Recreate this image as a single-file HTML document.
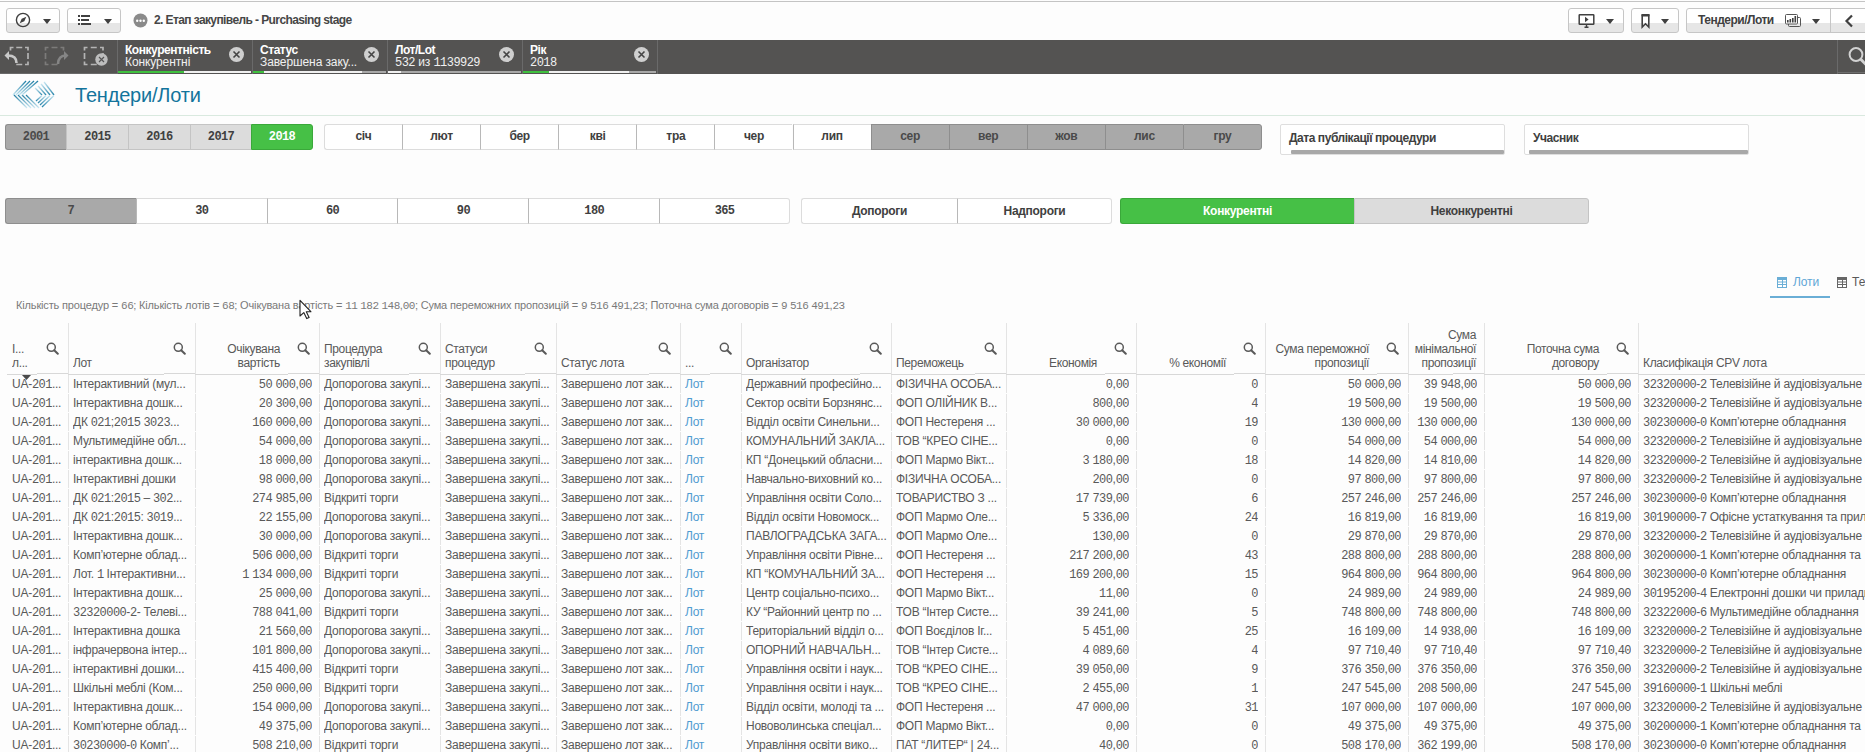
<!DOCTYPE html>
<html><head><meta charset="utf-8">
<style>
*{box-sizing:border-box;margin:0;padding:0}
html,body{width:1865px;height:752px;overflow:hidden;background:#fdfdfd;font-family:"Liberation Sans",sans-serif;color:#595959;position:relative}
.a{position:absolute}
#tb{position:absolute;left:0;top:0;width:1865px;height:40px;background:#fdfdfd}
#tl{position:absolute;left:0;top:1px;width:1865px;height:1px;background:#c4c4c4}
.btn{position:absolute;top:8px;height:25px;border:1px solid #c6c6c6;border-radius:3px;background:linear-gradient(#fff 0,#fff 62%,#e6e6e6 62%,#e6e6e6 100%)}
.caret{position:absolute;width:0;height:0;border-left:4px solid transparent;border-right:4px solid transparent;border-top:5px solid #404040}
#sb{position:absolute;left:0;top:40px;width:1865px;height:34px;background:#545352}
.sel{position:absolute;top:0;height:34px;width:133px;color:#fff;font-size:12px;border-left:1px solid #6a6a6a;}
.sel .t{position:absolute;left:7px;top:3px;font-weight:bold;letter-spacing:-0.45px}
.sel .v{position:absolute;left:7px;top:15px;letter-spacing:-0.1px;color:#f0f0f0}
.sel .bar{position:absolute;left:0;bottom:1px;height:2px;width:133px;background:#a8a8a8}
.sel .bar i{position:absolute;top:0;height:2px;display:block}
.xc{position:absolute;top:7px;width:15px;height:15px;border-radius:50%;background:#cfcfcf}
#title{position:absolute;left:75px;top:84px;font-size:20px;color:#13749c;letter-spacing:-0.2px}
.yb{position:absolute;top:124px;height:26px;font-size:12px;font-weight:bold;text-align:center;line-height:25px;border:1px solid #b9b9b9;color:#404040}
.mb{position:absolute;top:124px;height:26px;font-size:12px;font-weight:bold;text-align:center;line-height:25px;border:1px solid #dedede;background:#fff;color:#404040;letter-spacing:-0.3px}
.mb.g{background:#a8a8a8;border-color:#8f8f8f}
.db{position:absolute;height:26px;font-size:12px;font-weight:bold;text-align:center;line-height:25px;border:1px solid #dedede;background:#fff;color:#404040;letter-spacing:-0.3px}
.bt{position:absolute;font-size:12px;font-weight:bold;text-align:center;line-height:23px;letter-spacing:-0.3px}
.bt.mono{font-family:"Liberation Mono",monospace;letter-spacing:-0.6px;line-height:24px}
.fb{position:absolute;top:124px;height:31px;border:1px solid #dedede;background:#fff;border-radius:2px;font-size:12px;font-weight:bold;color:#404040;letter-spacing:-0.45px}
.fb span{position:absolute;left:8px;top:6px}
.fb i{position:absolute;left:10px;right:0;bottom:0;height:4px;background:#a8a8a8;border-radius:1px}
.ht{position:absolute;font-size:12px;line-height:14px;letter-spacing:-0.35px;white-space:nowrap;overflow:hidden;color:#595959}
.ht.r{text-align:right;overflow:visible}
.si{position:absolute}
.vl{position:absolute;top:323px;width:1px;height:51px;background:#e4e4e4}
.vb{position:absolute;top:375px;width:1px;height:377px;background:repeating-linear-gradient(to bottom,#e4e4e4 0,#e4e4e4 18px,#fdfdfd 18px,#fdfdfd 19px)}
.c{position:absolute;font-size:12px;line-height:19px;height:19px;white-space:nowrap;overflow:hidden;letter-spacing:-0.25px}
.c.r{letter-spacing:-0.05px}
.lnk{color:#4f9bd0}
.m{font-family:"Liberation Mono",monospace;letter-spacing:-0.55px}
</style></head><body>
<div id="tb">
 <div id="tl"></div>
 <div class="btn" style="left:6px;width:54px"><svg class="a" style="left:8px;top:3px" width="16" height="16" viewBox="0 0 16 16"><circle cx="8" cy="8" r="6.6" fill="none" stroke="#404040" stroke-width="1.4"/><path d="M11.3 4.7 L9.3 9.3 L4.7 11.3 L6.7 6.7Z" fill="#404040"/></svg><div class="caret" style="left:36px;top:10px"></div></div>
 <div class="btn" style="left:67px;width:54px"><svg class="a" style="left:9px;top:4px" width="16" height="14" viewBox="0 0 16 14"><rect x="1" y="2" width="2" height="2" fill="#404040"/><rect x="4" y="2" width="9" height="2" fill="#404040"/><rect x="1" y="6" width="2" height="2" fill="#404040"/><rect x="4" y="6" width="8" height="2" fill="#404040"/><rect x="1" y="10" width="2" height="2" fill="#404040"/><rect x="4" y="10" width="10" height="2" fill="#404040"/></svg><div class="caret" style="left:36px;top:10px"></div></div>
 <svg class="a" style="left:133px;top:13px" width="15" height="15" viewBox="0 0 15 15"><circle cx="7.5" cy="7.5" r="7" fill="#8a8a8a"/><circle cx="4.2" cy="7.7" r="1.2" fill="#fff"/><circle cx="7.5" cy="7.7" r="1.2" fill="#fff"/><circle cx="10.8" cy="7.7" r="1.2" fill="#fff"/></svg>
 <div class="a" style="left:154px;top:13px;font-size:12px;font-weight:bold;color:#464646;letter-spacing:-0.6px">2. Етап закупівель - Purchasing stage</div>
 <div class="btn" style="left:1568px;width:56px"><svg class="a" style="left:9px;top:4px" width="18" height="16" viewBox="0 0 18 16"><rect x="1.2" y="1.7" width="14.6" height="9.6" rx="0.6" fill="none" stroke="#404040" stroke-width="1.5"/><path d="M7 3.8 L10.6 6.5 L7 9.2Z" fill="#404040"/><path d="M8.5 11.5 V14 M6.5 14.3 H10.5" stroke="#404040" stroke-width="1.4"/></svg><div class="caret" style="left:37px;top:10px"></div></div>
 <div class="btn" style="left:1631px;width:48px"><svg class="a" style="left:8px;top:4px" width="12" height="16" viewBox="0 0 12 16"><path d="M2.2 2 H8.8 V14 L5.5 10.8 L2.2 14Z" fill="none" stroke="#404040" stroke-width="1.6" stroke-linejoin="miter"/><rect x="1.5" y="1" width="8" height="2.5" rx="1" fill="#404040"/></svg><div class="caret" style="left:29px;top:10px"></div></div>
 <div class="btn" style="left:1686px;width:146px;border-radius:3px 0 0 3px"><div class="a" style="left:11px;top:4px;font-size:12px;font-weight:bold;color:#404040;letter-spacing:-0.5px">Тендери/Лоти</div><svg class="a" style="left:98px;top:5px" width="17" height="15" viewBox="0 0 17 15"><rect x="3.5" y="3.5" width="12" height="9" rx="1" fill="none" stroke="#555" stroke-width="1"/><rect x="0.5" y="0.5" width="12" height="9.5" rx="1" fill="#fff" stroke="#555" stroke-width="1"/><rect x="2" y="6" width="1.6" height="2.5" fill="#404040"/><rect x="4.5" y="5" width="1.6" height="3.5" fill="#404040"/><rect x="7" y="4" width="1.6" height="4.5" fill="#404040"/><rect x="9.5" y="2" width="1.6" height="6.5" fill="#404040"/></svg><div class="caret" style="left:125px;top:10px"></div></div>
 <div class="btn" style="left:1830px;width:50px;border-radius:0"><svg class="a" style="left:13px;top:5px" width="10" height="14" viewBox="0 0 10 14"><path d="M8 1.5 L2.5 7 L8 12.5" fill="none" stroke="#404040" stroke-width="2.2"/></svg></div>
</div>
<div id="sb">
 <svg class="a" style="left:0;top:0" width="116" height="33" viewBox="0 0 116 33"><path d="M10.5 10.5V7.5H13.5M16.25 7.5H22.25M25 7.5H28V10.5M28 13.0V19.0M28 21.5V24.5H25M22.25 24.5H16.25" stroke="#b4b4b4" stroke-width="1.7" fill="none"/><path d="M16.5 23 C16.5 17.5 13 15.5 8 15.5" stroke="#c8c8c8" stroke-width="2.6" fill="none"/><path d="M4.5 15.5 L9 11 L9 20Z" fill="#c8c8c8"/><path d="M45.5 10.5V7.5H48.5M51.5 7.5H57.5M60.5 7.5H63.5V10.5M57.5 24.5H51.5M48.5 24.5H45.5V21.5M45.5 19.0V13.0" stroke="#7c7b7a" stroke-width="1.7" fill="none"/><path d="M58 24 C58 18.5 61.5 15.5 65 15.5" stroke="#858585" stroke-width="2.6" fill="none"/><path d="M68.5 15.5 L64 11 L64 20Z" fill="#858585"/><path d="M84.5 10.5V7.5H87.5M90.75 7.5H96.75M100 7.5H103V10.5M103 13.0V19.0M96.75 24.5H90.75M87.5 24.5H84.5V21.5M84.5 19.0V13.0" stroke="#b4b4b4" stroke-width="1.7" fill="none"/><circle cx="101.5" cy="19.5" r="6.2" fill="#bdbdbd"/><path d="M99 17 L104 22 M104 17 L99 22" stroke="#555" stroke-width="1.2"/></svg>
 
 <div class="sel" style="left:117px"><div class="t">Конкурентність</div><div class="v">Конкурентні</div><div class="xc" style="left:111px"><svg width="15" height="15" viewBox="0 0 15 15"><path d="M4.5 4.5 L10.5 10.5 M10.5 4.5 L4.5 10.5" stroke="#454545" stroke-width="1.6"/></svg></div><div class="bar"><i style="left:0px;width:66px;background:#3fc13f"></i><i style="left:66px;width:67px;background:#f0f0f0"></i></div></div>
<div class="sel" style="left:252px"><div class="t">Статус</div><div class="v">Завершена заку...</div><div class="xc" style="left:111px"><svg width="15" height="15" viewBox="0 0 15 15"><path d="M4.5 4.5 L10.5 10.5 M10.5 4.5 L4.5 10.5" stroke="#454545" stroke-width="1.6"/></svg></div><div class="bar"><i style="left:0px;width:11px;background:#3fc13f"></i><i style="left:11px;width:98px;background:#f0f0f0"></i></div></div>
<div class="sel" style="left:387px"><div class="t">Лот/Lot</div><div class="v"><span class="m">532</span> из <span class="m">1139929</span></div><div class="xc" style="left:111px"><svg width="15" height="15" viewBox="0 0 15 15"><path d="M4.5 4.5 L10.5 10.5 M10.5 4.5 L4.5 10.5" stroke="#454545" stroke-width="1.6"/></svg></div><div class="bar"><i style="left:0px;width:13px;background:#f0f0f0"></i></div></div>
<div class="sel" style="left:522px"><div class="t">Рік</div><div class="v"><span class="m">2018</span></div><div class="xc" style="left:111px"><svg width="15" height="15" viewBox="0 0 15 15"><path d="M4.5 4.5 L10.5 10.5 M10.5 4.5 L4.5 10.5" stroke="#454545" stroke-width="1.6"/></svg></div><div class="bar"><i style="left:0px;width:26px;background:#3fc13f"></i><i style="left:26px;width:80px;background:#f0f0f0"></i></div></div>
 <div class="a" style="left:0;top:33px;width:117px;height:1px;background:#6a6a6a"></div>
 <div class="a" style="left:657px;top:0;width:1px;height:34px;background:#6a6a6a"></div>
 <div class="a" style="left:1837px;top:0;width:1px;height:34px;background:#6a6a6a"></div>
 <svg class="a" style="left:1847px;top:6px" width="19" height="20" viewBox="0 0 19 20"><circle cx="9" cy="8.5" r="6.4" fill="none" stroke="#d2d2d2" stroke-width="2"/><path d="M13.5 13 L19 18.5" stroke="#d2d2d2" stroke-width="3"/></svg><div class="a" style="left:1837px;top:32px;width:28px;height:1px;background:#6e6e6e"></div>
</div>
<svg class="a" style="left:10px;top:78px" width="48" height="34" viewBox="10 78 48 34"><defs><linearGradient id="g1" x1="0" y1="0" x2="0" y2="1"><stop offset="0" stop-color="#1e7fa6"/><stop offset="1" stop-color="#c6e6f2"/></linearGradient><linearGradient id="g2" x1="0" y1="0" x2="0" y2="1"><stop offset="0" stop-color="#237ea3"/><stop offset="1" stop-color="#cde9f4"/></linearGradient><linearGradient id="g3" x1="0" y1="0" x2="1" y2="0"><stop offset="0" stop-color="#c9e7f3"/><stop offset="1" stop-color="#2b86ab"/></linearGradient><linearGradient id="g4" x1="1" y1="0" x2="0" y2="1"><stop offset="0" stop-color="#c9e7f3"/><stop offset="1" stop-color="#2a87ad"/></linearGradient></defs><g stroke-width="1.3" fill="none" stroke-linecap="butt"><path d="M26 81 L13 95" stroke="url(#g1)"/><path d="M14 95 L27 108" stroke="url(#g2)"/><path d="M35 88 L42 95" stroke="url(#g3)"/><path d="M42 95.5 L36 101" stroke="url(#g4)"/><path d="M30 81 L16 95" stroke="url(#g1)"/><path d="M18 95 L31 108" stroke="url(#g2)"/><path d="M38 86 L46 95" stroke="url(#g3)"/><path d="M46 95.5 L38 103" stroke="url(#g4)"/><path d="M34 81 L19 95" stroke="url(#g1)"/><path d="M22 95 L35 108" stroke="url(#g2)"/><path d="M41 84 L50 95" stroke="url(#g3)"/><path d="M50 95.5 L40 105" stroke="url(#g4)"/><path d="M38 81 L22 95" stroke="url(#g1)"/><path d="M26 95 L39 108" stroke="url(#g2)"/><path d="M44 82 L54 95" stroke="url(#g3)"/><path d="M54 95.5 L42 107" stroke="url(#g4)"/></g></svg>
<div id="title">Тендери/Лоти</div>
<div class="a" style="left:0;top:115px;width:1865px;height:1px;background:#d9e9df"></div>
<div class="bt mono" style="left:5.00px;top:124px;width:61.00px;height:26px;background:#a9a9a9;color:#4a4a4a;border-top:1px solid #8e8e8e;border-bottom:1px solid #8e8e8e;border-left:1px solid #8e8e8e;border-radius:3px 0 0 3px;">2001</div>
<div class="bt mono" style="left:66.00px;top:124px;width:62.00px;height:26px;background:#dcdcdc;color:#404040;border-top:1px solid #c4c4c4;border-bottom:1px solid #c4c4c4;border-left:1px solid #c4c4c4;">2015</div>
<div class="bt mono" style="left:128.00px;top:124px;width:62.00px;height:26px;background:#dcdcdc;color:#404040;border-top:1px solid #c4c4c4;border-bottom:1px solid #c4c4c4;border-left:1px solid #c4c4c4;">2016</div>
<div class="bt mono" style="left:190.00px;top:124px;width:61.00px;height:26px;background:#dcdcdc;color:#404040;border-top:1px solid #c4c4c4;border-bottom:1px solid #c4c4c4;border-left:1px solid #c4c4c4;">2017</div>
<div class="bt mono" style="left:251.00px;top:124px;width:62.00px;height:26px;background:#46c046;color:#fff;border-top:1px solid #3aa83a;border-bottom:1px solid #3aa83a;border-left:1px solid #3aa83a;border-right:1px solid #3aa83a;border-radius:0 3px 3px 0;">2018</div>
<div class="bt" style="left:324.00px;top:124px;width:78.00px;height:26px;background:#fff;color:#404040;border-top:1px solid #dcdcdc;border-bottom:1px solid #dcdcdc;border-left:1px solid #dcdcdc;border-radius:3px 0 0 3px;">січ</div>
<div class="bt" style="left:402.00px;top:124px;width:78.10px;height:26px;background:#fff;color:#404040;border-top:1px solid #dcdcdc;border-bottom:1px solid #dcdcdc;border-left:1px solid #b8b8b8;">лют</div>
<div class="bt" style="left:480.10px;top:124px;width:78.10px;height:26px;background:#fff;color:#404040;border-top:1px solid #dcdcdc;border-bottom:1px solid #dcdcdc;border-left:1px solid #b8b8b8;">бер</div>
<div class="bt" style="left:558.20px;top:124px;width:78.10px;height:26px;background:#fff;color:#404040;border-top:1px solid #dcdcdc;border-bottom:1px solid #dcdcdc;border-left:1px solid #b8b8b8;">кві</div>
<div class="bt" style="left:636.30px;top:124px;width:78.10px;height:26px;background:#fff;color:#404040;border-top:1px solid #dcdcdc;border-bottom:1px solid #dcdcdc;border-left:1px solid #b8b8b8;">тра</div>
<div class="bt" style="left:714.40px;top:124px;width:78.10px;height:26px;background:#fff;color:#404040;border-top:1px solid #dcdcdc;border-bottom:1px solid #dcdcdc;border-left:1px solid #b8b8b8;">чер</div>
<div class="bt" style="left:792.50px;top:124px;width:78.10px;height:26px;background:#fff;color:#404040;border-top:1px solid #dcdcdc;border-bottom:1px solid #dcdcdc;border-left:1px solid #b8b8b8;">лип</div>
<div class="bt" style="left:870.60px;top:124px;width:78.10px;height:26px;background:#a9a9a9;color:#4a4a4a;border-top:1px solid #8e8e8e;border-bottom:1px solid #8e8e8e;border-left:1px solid #8e8e8e;">сер</div>
<div class="bt" style="left:948.70px;top:124px;width:78.10px;height:26px;background:#a9a9a9;color:#4a4a4a;border-top:1px solid #8e8e8e;border-bottom:1px solid #8e8e8e;border-left:1px solid #8e8e8e;">вер</div>
<div class="bt" style="left:1026.80px;top:124px;width:78.10px;height:26px;background:#a9a9a9;color:#4a4a4a;border-top:1px solid #8e8e8e;border-bottom:1px solid #8e8e8e;border-left:1px solid #8e8e8e;">жов</div>
<div class="bt" style="left:1104.90px;top:124px;width:78.10px;height:26px;background:#a9a9a9;color:#4a4a4a;border-top:1px solid #8e8e8e;border-bottom:1px solid #8e8e8e;border-left:1px solid #8e8e8e;">лис</div>
<div class="bt" style="left:1183.00px;top:124px;width:79.00px;height:26px;background:#a9a9a9;color:#4a4a4a;border-top:1px solid #8e8e8e;border-bottom:1px solid #8e8e8e;border-left:1px solid #8e8e8e;border-right:1px solid #8e8e8e;border-radius:0 3px 3px 0;">гру</div>
<div class="bt mono" style="left:5.00px;top:198px;width:130.83px;height:26px;background:#a9a9a9;color:#4a4a4a;border-top:1px solid #8e8e8e;border-bottom:1px solid #8e8e8e;border-left:1px solid #8e8e8e;border-radius:3px 0 0 3px;">7</div>
<div class="bt mono" style="left:135.83px;top:198px;width:130.83px;height:26px;background:#fff;color:#404040;border-top:1px solid #dcdcdc;border-bottom:1px solid #dcdcdc;border-left:1px solid #b8b8b8;">30</div>
<div class="bt mono" style="left:266.66px;top:198px;width:130.83px;height:26px;background:#fff;color:#404040;border-top:1px solid #dcdcdc;border-bottom:1px solid #dcdcdc;border-left:1px solid #b8b8b8;">60</div>
<div class="bt mono" style="left:397.49px;top:198px;width:130.83px;height:26px;background:#fff;color:#404040;border-top:1px solid #dcdcdc;border-bottom:1px solid #dcdcdc;border-left:1px solid #b8b8b8;">90</div>
<div class="bt mono" style="left:528.32px;top:198px;width:130.83px;height:26px;background:#fff;color:#404040;border-top:1px solid #dcdcdc;border-bottom:1px solid #dcdcdc;border-left:1px solid #b8b8b8;">180</div>
<div class="bt mono" style="left:659.15px;top:198px;width:130.83px;height:26px;background:#fff;color:#404040;border-top:1px solid #dcdcdc;border-bottom:1px solid #dcdcdc;border-left:1px solid #b8b8b8;border-right:1px solid #dcdcdc;border-radius:0 3px 3px 0;">365</div>
<div class="bt" style="line-height:24px;left:801.00px;top:198px;width:156.00px;height:26px;background:#fff;color:#404040;border-top:1px solid #dcdcdc;border-bottom:1px solid #dcdcdc;border-left:1px solid #dcdcdc;border-radius:3px 0 0 3px;">Допороги</div>
<div class="bt" style="line-height:24px;left:957.00px;top:198px;width:155.00px;height:26px;background:#fff;color:#404040;border-top:1px solid #dcdcdc;border-bottom:1px solid #dcdcdc;border-left:1px solid #b8b8b8;border-right:1px solid #dcdcdc;border-radius:0 3px 3px 0;">Надпороги</div>
<div class="bt" style="line-height:24px;left:1120.00px;top:198px;width:234.00px;height:26px;background:#46c046;color:#fff;border-top:1px solid #3aa83a;border-bottom:1px solid #3aa83a;border-left:1px solid #3aa83a;border-radius:3px 0 0 3px;">Конкурентні</div>
<div class="bt" style="line-height:24px;left:1354.00px;top:198px;width:235.00px;height:26px;background:#dcdcdc;color:#404040;border-top:1px solid #c4c4c4;border-bottom:1px solid #c4c4c4;border-left:1px solid #c4c4c4;border-right:1px solid #c4c4c4;border-radius:0 3px 3px 0;">Неконкурентні</div>
<div class="fb" style="left:1280px;width:225px"><span>Дата публікації процедури</span><i></i></div>
<div class="fb" style="left:1524px;width:225px"><span>Учасник</span><i style="left:4px"></i></div>
<div class="a" style="left:1770px;top:272px;width:60px;height:26px;border-bottom:2px solid #6aaed6"></div>
<svg class="a" style="left:1777px;top:277px" width="10" height="11" viewBox="0 0 10 11"><rect x="0" y="0" width="10" height="11" fill="#6aaed6"/><rect x="1" y="3" width="4" height="1.5" fill="#fff"/><rect x="6" y="3" width="3" height="1.5" fill="#fff"/><rect x="1" y="5.5" width="4" height="1.5" fill="#fff"/><rect x="6" y="5.5" width="3" height="1.5" fill="#fff"/><rect x="1" y="8" width="4" height="2" fill="#fff"/><rect x="6" y="8" width="3" height="2" fill="#fff"/></svg>
<div class="a" style="left:1793px;top:275px;font-size:12px;color:#5fa6d6;letter-spacing:-0.1px">Лоти</div>
<svg class="a" style="left:1837px;top:277px" width="10" height="11" viewBox="0 0 10 11"><rect x="0" y="0" width="10" height="11" fill="#666"/><rect x="1" y="3" width="4" height="1.5" fill="#fff"/><rect x="6" y="3" width="3" height="1.5" fill="#fff"/><rect x="1" y="5.5" width="4" height="1.5" fill="#fff"/><rect x="6" y="5.5" width="3" height="1.5" fill="#fff"/><rect x="1" y="8" width="4" height="2" fill="#fff"/><rect x="6" y="8" width="3" height="2" fill="#fff"/></svg>
<div class="a" style="left:1852px;top:275px;font-size:12px;color:#595959">Те</div>
<div class="a" style="left:16px;top:299px;font-size:11px;color:#7a7a7a;letter-spacing:-0.155px;white-space:nowrap">Кількість процедур = <span class="m" style="letter-spacing:-0.5px">66</span>; Кількість лотів = <span class="m" style="letter-spacing:-0.5px">68</span>; Очікувана вартість = <span class="m" style="letter-spacing:-0.5px">11</span> <span class="m" style="letter-spacing:-0.5px">182</span> <span class="m" style="letter-spacing:-0.5px">148</span>,<span class="m" style="letter-spacing:-0.5px">00</span>; Сума переможних пропозицій = <span class="m" style="letter-spacing:-0.5px">9</span> <span class="m" style="letter-spacing:-0.5px">516</span> <span class="m" style="letter-spacing:-0.5px">491</span>,<span class="m" style="letter-spacing:-0.5px">23</span>; Поточна сума договорів = <span class="m" style="letter-spacing:-0.5px">9</span> <span class="m" style="letter-spacing:-0.5px">516</span> <span class="m" style="letter-spacing:-0.5px">491</span>,<span class="m" style="letter-spacing:-0.5px">23</span></div>
<div class="a" style="left:7px;top:374px;width:30px;height:1px;background:#d8d8d8"></div><div class="a" style="left:37px;top:373px;width:31px;height:1px;background:#d8d8d8"></div><div class="a" style="left:68px;top:374px;width:96px;height:1px;background:#d8d8d8"></div><div class="a" style="left:164px;top:373px;width:31px;height:1px;background:#d8d8d8"></div><div class="a" style="left:195px;top:374px;width:93px;height:1px;background:#d8d8d8"></div><div class="a" style="left:288px;top:373px;width:31px;height:1px;background:#d8d8d8"></div><div class="a" style="left:319px;top:374px;width:90px;height:1px;background:#d8d8d8"></div><div class="a" style="left:409px;top:373px;width:31px;height:1px;background:#d8d8d8"></div><div class="a" style="left:440px;top:374px;width:85px;height:1px;background:#d8d8d8"></div><div class="a" style="left:525px;top:373px;width:31px;height:1px;background:#d8d8d8"></div><div class="a" style="left:556px;top:374px;width:93px;height:1px;background:#d8d8d8"></div><div class="a" style="left:649px;top:373px;width:31px;height:1px;background:#d8d8d8"></div><div class="a" style="left:680px;top:374px;width:30px;height:1px;background:#d8d8d8"></div><div class="a" style="left:710px;top:373px;width:31px;height:1px;background:#d8d8d8"></div><div class="a" style="left:741px;top:374px;width:119px;height:1px;background:#d8d8d8"></div><div class="a" style="left:860px;top:373px;width:31px;height:1px;background:#d8d8d8"></div><div class="a" style="left:891px;top:374px;width:84px;height:1px;background:#d8d8d8"></div><div class="a" style="left:975px;top:373px;width:31px;height:1px;background:#d8d8d8"></div><div class="a" style="left:1006px;top:374px;width:99px;height:1px;background:#d8d8d8"></div><div class="a" style="left:1105px;top:373px;width:31px;height:1px;background:#d8d8d8"></div><div class="a" style="left:1136px;top:374px;width:98px;height:1px;background:#d8d8d8"></div><div class="a" style="left:1234px;top:373px;width:31px;height:1px;background:#d8d8d8"></div><div class="a" style="left:1265px;top:374px;width:112px;height:1px;background:#d8d8d8"></div><div class="a" style="left:1377px;top:373px;width:31px;height:1px;background:#d8d8d8"></div><div class="a" style="left:1408px;top:374px;width:45px;height:1px;background:#d8d8d8"></div><div class="a" style="left:1453px;top:373px;width:31px;height:1px;background:#d8d8d8"></div><div class="a" style="left:1484px;top:374px;width:123px;height:1px;background:#d8d8d8"></div><div class="a" style="left:1607px;top:373px;width:31px;height:1px;background:#d8d8d8"></div><div class="a" style="left:1638px;top:374px;width:231px;height:1px;background:#d8d8d8"></div><div class="a" style="left:1869px;top:373px;width:31px;height:1px;background:#d8d8d8"></div>
<div class="ht" style="left:12px;top:342px;width:31px">І...<br>л...</div>
<svg class="si" style="left:46px;top:342px" width="13" height="13" viewBox="0 0 13 13"><circle cx="5.3" cy="5.3" r="4" fill="none" stroke="#595959" stroke-width="1.5"/><path d="M8.2 8.2 L11.8 11.8" stroke="#595959" stroke-width="2" stroke-linecap="round"/></svg>
<div class="ht" style="left:73px;top:356px;width:97px">Лот</div>
<svg class="si" style="left:173px;top:342px" width="13" height="13" viewBox="0 0 13 13"><circle cx="5.3" cy="5.3" r="4" fill="none" stroke="#595959" stroke-width="1.5"/><path d="M8.2 8.2 L11.8 11.8" stroke="#595959" stroke-width="2" stroke-linecap="round"/></svg>
<div class="vl" style="left:68px"></div><div class="vb" style="left:68px"></div>
<div class="ht r" style="right:1585px;top:342px">Очікувана<br>вартість</div>
<svg class="si" style="left:297px;top:342px" width="13" height="13" viewBox="0 0 13 13"><circle cx="5.3" cy="5.3" r="4" fill="none" stroke="#595959" stroke-width="1.5"/><path d="M8.2 8.2 L11.8 11.8" stroke="#595959" stroke-width="2" stroke-linecap="round"/></svg>
<div class="vl" style="left:195px"></div><div class="vb" style="left:195px"></div>
<div class="ht" style="left:324px;top:342px;width:91px">Процедура<br>закупівлі</div>
<svg class="si" style="left:418px;top:342px" width="13" height="13" viewBox="0 0 13 13"><circle cx="5.3" cy="5.3" r="4" fill="none" stroke="#595959" stroke-width="1.5"/><path d="M8.2 8.2 L11.8 11.8" stroke="#595959" stroke-width="2" stroke-linecap="round"/></svg>
<div class="vl" style="left:319px"></div><div class="vb" style="left:319px"></div>
<div class="ht" style="left:445px;top:342px;width:86px">Статуси<br>процедур</div>
<svg class="si" style="left:534px;top:342px" width="13" height="13" viewBox="0 0 13 13"><circle cx="5.3" cy="5.3" r="4" fill="none" stroke="#595959" stroke-width="1.5"/><path d="M8.2 8.2 L11.8 11.8" stroke="#595959" stroke-width="2" stroke-linecap="round"/></svg>
<div class="vl" style="left:440px"></div><div class="vb" style="left:440px"></div>
<div class="ht" style="left:561px;top:356px;width:94px">Статус лота</div>
<svg class="si" style="left:658px;top:342px" width="13" height="13" viewBox="0 0 13 13"><circle cx="5.3" cy="5.3" r="4" fill="none" stroke="#595959" stroke-width="1.5"/><path d="M8.2 8.2 L11.8 11.8" stroke="#595959" stroke-width="2" stroke-linecap="round"/></svg>
<div class="vl" style="left:556px"></div><div class="vb" style="left:556px"></div>
<div class="ht" style="left:685px;top:356px;width:31px">...</div>
<svg class="si" style="left:719px;top:342px" width="13" height="13" viewBox="0 0 13 13"><circle cx="5.3" cy="5.3" r="4" fill="none" stroke="#595959" stroke-width="1.5"/><path d="M8.2 8.2 L11.8 11.8" stroke="#595959" stroke-width="2" stroke-linecap="round"/></svg>
<div class="vl" style="left:680px"></div><div class="vb" style="left:680px"></div>
<div class="ht" style="left:746px;top:356px;width:120px">Організатор</div>
<svg class="si" style="left:869px;top:342px" width="13" height="13" viewBox="0 0 13 13"><circle cx="5.3" cy="5.3" r="4" fill="none" stroke="#595959" stroke-width="1.5"/><path d="M8.2 8.2 L11.8 11.8" stroke="#595959" stroke-width="2" stroke-linecap="round"/></svg>
<div class="vl" style="left:741px"></div><div class="vb" style="left:741px"></div>
<div class="ht" style="left:896px;top:356px;width:85px">Переможець</div>
<svg class="si" style="left:984px;top:342px" width="13" height="13" viewBox="0 0 13 13"><circle cx="5.3" cy="5.3" r="4" fill="none" stroke="#595959" stroke-width="1.5"/><path d="M8.2 8.2 L11.8 11.8" stroke="#595959" stroke-width="2" stroke-linecap="round"/></svg>
<div class="vl" style="left:891px"></div><div class="vb" style="left:891px"></div>
<div class="ht r" style="right:768px;top:356px">Економія</div>
<svg class="si" style="left:1114px;top:342px" width="13" height="13" viewBox="0 0 13 13"><circle cx="5.3" cy="5.3" r="4" fill="none" stroke="#595959" stroke-width="1.5"/><path d="M8.2 8.2 L11.8 11.8" stroke="#595959" stroke-width="2" stroke-linecap="round"/></svg>
<div class="vl" style="left:1006px"></div><div class="vb" style="left:1006px"></div>
<div class="ht r" style="right:639px;top:356px">% економії</div>
<svg class="si" style="left:1243px;top:342px" width="13" height="13" viewBox="0 0 13 13"><circle cx="5.3" cy="5.3" r="4" fill="none" stroke="#595959" stroke-width="1.5"/><path d="M8.2 8.2 L11.8 11.8" stroke="#595959" stroke-width="2" stroke-linecap="round"/></svg>
<div class="vl" style="left:1136px"></div><div class="vb" style="left:1136px"></div>
<div class="ht r" style="right:496px;top:342px">Сума переможної<br>пропозиції</div>
<svg class="si" style="left:1386px;top:342px" width="13" height="13" viewBox="0 0 13 13"><circle cx="5.3" cy="5.3" r="4" fill="none" stroke="#595959" stroke-width="1.5"/><path d="M8.2 8.2 L11.8 11.8" stroke="#595959" stroke-width="2" stroke-linecap="round"/></svg>
<div class="vl" style="left:1265px"></div><div class="vb" style="left:1265px"></div>
<div class="ht r" style="right:389px;top:328px">Сума<br>мінімальної<br>пропозиції</div>
<div class="vl" style="left:1408px"></div><div class="vb" style="left:1408px"></div>
<div class="ht r" style="right:266px;top:342px">Поточна сума<br>договору</div>
<svg class="si" style="left:1616px;top:342px" width="13" height="13" viewBox="0 0 13 13"><circle cx="5.3" cy="5.3" r="4" fill="none" stroke="#595959" stroke-width="1.5"/><path d="M8.2 8.2 L11.8 11.8" stroke="#595959" stroke-width="2" stroke-linecap="round"/></svg>
<div class="vl" style="left:1484px"></div><div class="vb" style="left:1484px"></div>
<div class="ht" style="left:1643px;top:356px;width:197px">Класифікація CPV лота</div>
<div class="vl" style="left:1638px"></div><div class="vb" style="left:1638px"></div>
<div class="c" style="left:12px;top:375px;width:55px">UA-<span class="m">201</span>...</div>
<div class="c" style="left:73px;top:375px;width:121px">Інтерактивний (мул...</div>
<div class="c r" style="right:1553px;top:375px"><span class="m">50</span> <span class="m">000</span>,<span class="m">00</span></div>
<div class="c" style="left:324px;top:375px;width:115px">Допорогова закупі...</div>
<div class="c" style="left:445px;top:375px;width:110px">Завершена закупі...</div>
<div class="c" style="left:561px;top:375px;width:118px">Завершено лот зак...</div>
<div class="c lnk" style="left:685px;top:375px;width:55px">Лот</div>
<div class="c" style="left:746px;top:375px;width:144px">Державний професійно...</div>
<div class="c" style="left:896px;top:375px;width:109px">ФІЗИЧНА ОСОБА...</div>
<div class="c r" style="right:736px;top:375px"><span class="m">0</span>,<span class="m">00</span></div>
<div class="c r" style="right:607px;top:375px"><span class="m">0</span></div>
<div class="c r" style="right:464px;top:375px"><span class="m">50</span> <span class="m">000</span>,<span class="m">00</span></div>
<div class="c r" style="right:388px;top:375px"><span class="m">39</span> <span class="m">948</span>,<span class="m">00</span></div>
<div class="c r" style="right:234px;top:375px"><span class="m">50</span> <span class="m">000</span>,<span class="m">00</span></div>
<div class="c" style="left:1643px;top:375px;width:400px"><span class="m">32320000</span>-<span class="m">2</span> Телевізійне й аудіовізуальне обладнання</div>
<div class="c" style="left:12px;top:394px;width:55px">UA-<span class="m">201</span>...</div>
<div class="c" style="left:73px;top:394px;width:121px">Інтерактивна дошк...</div>
<div class="c r" style="right:1553px;top:394px"><span class="m">20</span> <span class="m">300</span>,<span class="m">00</span></div>
<div class="c" style="left:324px;top:394px;width:115px">Допорогова закупі...</div>
<div class="c" style="left:445px;top:394px;width:110px">Завершена закупі...</div>
<div class="c" style="left:561px;top:394px;width:118px">Завершено лот зак...</div>
<div class="c lnk" style="left:685px;top:394px;width:55px">Лот</div>
<div class="c" style="left:746px;top:394px;width:144px">Сектор освіти Борзнянс...</div>
<div class="c" style="left:896px;top:394px;width:109px">ФОП ОЛІЙНИК В...</div>
<div class="c r" style="right:736px;top:394px"><span class="m">800</span>,<span class="m">00</span></div>
<div class="c r" style="right:607px;top:394px"><span class="m">4</span></div>
<div class="c r" style="right:464px;top:394px"><span class="m">19</span> <span class="m">500</span>,<span class="m">00</span></div>
<div class="c r" style="right:388px;top:394px"><span class="m">19</span> <span class="m">500</span>,<span class="m">00</span></div>
<div class="c r" style="right:234px;top:394px"><span class="m">19</span> <span class="m">500</span>,<span class="m">00</span></div>
<div class="c" style="left:1643px;top:394px;width:400px"><span class="m">32320000</span>-<span class="m">2</span> Телевізійне й аудіовізуальне обладнання</div>
<div class="c" style="left:12px;top:413px;width:55px">UA-<span class="m">201</span>...</div>
<div class="c" style="left:73px;top:413px;width:121px">ДК <span class="m">021</span>;<span class="m">2015</span> <span class="m">3023</span>...</div>
<div class="c r" style="right:1553px;top:413px"><span class="m">160</span> <span class="m">000</span>,<span class="m">00</span></div>
<div class="c" style="left:324px;top:413px;width:115px">Допорогова закупі...</div>
<div class="c" style="left:445px;top:413px;width:110px">Завершена закупі...</div>
<div class="c" style="left:561px;top:413px;width:118px">Завершено лот зак...</div>
<div class="c lnk" style="left:685px;top:413px;width:55px">Лот</div>
<div class="c" style="left:746px;top:413px;width:144px">Відділ освіти Синельни...</div>
<div class="c" style="left:896px;top:413px;width:109px">ФОП Нестереня ...</div>
<div class="c r" style="right:736px;top:413px"><span class="m">30</span> <span class="m">000</span>,<span class="m">00</span></div>
<div class="c r" style="right:607px;top:413px"><span class="m">19</span></div>
<div class="c r" style="right:464px;top:413px"><span class="m">130</span> <span class="m">000</span>,<span class="m">00</span></div>
<div class="c r" style="right:388px;top:413px"><span class="m">130</span> <span class="m">000</span>,<span class="m">00</span></div>
<div class="c r" style="right:234px;top:413px"><span class="m">130</span> <span class="m">000</span>,<span class="m">00</span></div>
<div class="c" style="left:1643px;top:413px;width:400px"><span class="m">30230000</span>-<span class="m">0</span> Комп’ютерне обладнання</div>
<div class="c" style="left:12px;top:432px;width:55px">UA-<span class="m">201</span>...</div>
<div class="c" style="left:73px;top:432px;width:121px">Мультимедійне обл...</div>
<div class="c r" style="right:1553px;top:432px"><span class="m">54</span> <span class="m">000</span>,<span class="m">00</span></div>
<div class="c" style="left:324px;top:432px;width:115px">Допорогова закупі...</div>
<div class="c" style="left:445px;top:432px;width:110px">Завершена закупі...</div>
<div class="c" style="left:561px;top:432px;width:118px">Завершено лот зак...</div>
<div class="c lnk" style="left:685px;top:432px;width:55px">Лот</div>
<div class="c" style="left:746px;top:432px;width:144px">КОМУНАЛЬНИЙ ЗАКЛА...</div>
<div class="c" style="left:896px;top:432px;width:109px">ТОВ “КРЕО СІНЕ...</div>
<div class="c r" style="right:736px;top:432px"><span class="m">0</span>,<span class="m">00</span></div>
<div class="c r" style="right:607px;top:432px"><span class="m">0</span></div>
<div class="c r" style="right:464px;top:432px"><span class="m">54</span> <span class="m">000</span>,<span class="m">00</span></div>
<div class="c r" style="right:388px;top:432px"><span class="m">54</span> <span class="m">000</span>,<span class="m">00</span></div>
<div class="c r" style="right:234px;top:432px"><span class="m">54</span> <span class="m">000</span>,<span class="m">00</span></div>
<div class="c" style="left:1643px;top:432px;width:400px"><span class="m">32320000</span>-<span class="m">2</span> Телевізійне й аудіовізуальне обладнання</div>
<div class="c" style="left:12px;top:451px;width:55px">UA-<span class="m">201</span>...</div>
<div class="c" style="left:73px;top:451px;width:121px">інтерактивна дошк...</div>
<div class="c r" style="right:1553px;top:451px"><span class="m">18</span> <span class="m">000</span>,<span class="m">00</span></div>
<div class="c" style="left:324px;top:451px;width:115px">Допорогова закупі...</div>
<div class="c" style="left:445px;top:451px;width:110px">Завершена закупі...</div>
<div class="c" style="left:561px;top:451px;width:118px">Завершено лот зак...</div>
<div class="c lnk" style="left:685px;top:451px;width:55px">Лот</div>
<div class="c" style="left:746px;top:451px;width:144px">КП “Донецький обласни...</div>
<div class="c" style="left:896px;top:451px;width:109px">ФОП Мармо Вікт...</div>
<div class="c r" style="right:736px;top:451px"><span class="m">3</span> <span class="m">180</span>,<span class="m">00</span></div>
<div class="c r" style="right:607px;top:451px"><span class="m">18</span></div>
<div class="c r" style="right:464px;top:451px"><span class="m">14</span> <span class="m">820</span>,<span class="m">00</span></div>
<div class="c r" style="right:388px;top:451px"><span class="m">14</span> <span class="m">810</span>,<span class="m">00</span></div>
<div class="c r" style="right:234px;top:451px"><span class="m">14</span> <span class="m">820</span>,<span class="m">00</span></div>
<div class="c" style="left:1643px;top:451px;width:400px"><span class="m">32320000</span>-<span class="m">2</span> Телевізійне й аудіовізуальне обладнання</div>
<div class="c" style="left:12px;top:470px;width:55px">UA-<span class="m">201</span>...</div>
<div class="c" style="left:73px;top:470px;width:121px">Інтерактивні дошки</div>
<div class="c r" style="right:1553px;top:470px"><span class="m">98</span> <span class="m">000</span>,<span class="m">00</span></div>
<div class="c" style="left:324px;top:470px;width:115px">Допорогова закупі...</div>
<div class="c" style="left:445px;top:470px;width:110px">Завершена закупі...</div>
<div class="c" style="left:561px;top:470px;width:118px">Завершено лот зак...</div>
<div class="c lnk" style="left:685px;top:470px;width:55px">Лот</div>
<div class="c" style="left:746px;top:470px;width:144px">Навчально-виховний ко...</div>
<div class="c" style="left:896px;top:470px;width:109px">ФІЗИЧНА ОСОБА...</div>
<div class="c r" style="right:736px;top:470px"><span class="m">200</span>,<span class="m">00</span></div>
<div class="c r" style="right:607px;top:470px"><span class="m">0</span></div>
<div class="c r" style="right:464px;top:470px"><span class="m">97</span> <span class="m">800</span>,<span class="m">00</span></div>
<div class="c r" style="right:388px;top:470px"><span class="m">97</span> <span class="m">800</span>,<span class="m">00</span></div>
<div class="c r" style="right:234px;top:470px"><span class="m">97</span> <span class="m">800</span>,<span class="m">00</span></div>
<div class="c" style="left:1643px;top:470px;width:400px"><span class="m">32320000</span>-<span class="m">2</span> Телевізійне й аудіовізуальне обладнання</div>
<div class="c" style="left:12px;top:489px;width:55px">UA-<span class="m">201</span>...</div>
<div class="c" style="left:73px;top:489px;width:121px">ДК <span class="m">021</span>:<span class="m">2015</span> – <span class="m">302</span>...</div>
<div class="c r" style="right:1553px;top:489px"><span class="m">274</span> <span class="m">985</span>,<span class="m">00</span></div>
<div class="c" style="left:324px;top:489px;width:115px">Відкриті торги</div>
<div class="c" style="left:445px;top:489px;width:110px">Завершена закупі...</div>
<div class="c" style="left:561px;top:489px;width:118px">Завершено лот зак...</div>
<div class="c lnk" style="left:685px;top:489px;width:55px">Лот</div>
<div class="c" style="left:746px;top:489px;width:144px">Управління освіти Соло...</div>
<div class="c" style="left:896px;top:489px;width:109px">ТОВАРИСТВО З ...</div>
<div class="c r" style="right:736px;top:489px"><span class="m">17</span> <span class="m">739</span>,<span class="m">00</span></div>
<div class="c r" style="right:607px;top:489px"><span class="m">6</span></div>
<div class="c r" style="right:464px;top:489px"><span class="m">257</span> <span class="m">246</span>,<span class="m">00</span></div>
<div class="c r" style="right:388px;top:489px"><span class="m">257</span> <span class="m">246</span>,<span class="m">00</span></div>
<div class="c r" style="right:234px;top:489px"><span class="m">257</span> <span class="m">246</span>,<span class="m">00</span></div>
<div class="c" style="left:1643px;top:489px;width:400px"><span class="m">30230000</span>-<span class="m">0</span> Комп’ютерне обладнання</div>
<div class="c" style="left:12px;top:508px;width:55px">UA-<span class="m">201</span>...</div>
<div class="c" style="left:73px;top:508px;width:121px">ДК <span class="m">021</span>:<span class="m">2015</span>: <span class="m">3019</span>...</div>
<div class="c r" style="right:1553px;top:508px"><span class="m">22</span> <span class="m">155</span>,<span class="m">00</span></div>
<div class="c" style="left:324px;top:508px;width:115px">Допорогова закупі...</div>
<div class="c" style="left:445px;top:508px;width:110px">Завершена закупі...</div>
<div class="c" style="left:561px;top:508px;width:118px">Завершено лот зак...</div>
<div class="c lnk" style="left:685px;top:508px;width:55px">Лот</div>
<div class="c" style="left:746px;top:508px;width:144px">Відділ освіти Новомоск...</div>
<div class="c" style="left:896px;top:508px;width:109px">ФОП Мармо Оле...</div>
<div class="c r" style="right:736px;top:508px"><span class="m">5</span> <span class="m">336</span>,<span class="m">00</span></div>
<div class="c r" style="right:607px;top:508px"><span class="m">24</span></div>
<div class="c r" style="right:464px;top:508px"><span class="m">16</span> <span class="m">819</span>,<span class="m">00</span></div>
<div class="c r" style="right:388px;top:508px"><span class="m">16</span> <span class="m">819</span>,<span class="m">00</span></div>
<div class="c r" style="right:234px;top:508px"><span class="m">16</span> <span class="m">819</span>,<span class="m">00</span></div>
<div class="c" style="left:1643px;top:508px;width:400px"><span class="m">30190000</span>-<span class="m">7</span> Офісне устаткування та приладдя</div>
<div class="c" style="left:12px;top:527px;width:55px">UA-<span class="m">201</span>...</div>
<div class="c" style="left:73px;top:527px;width:121px">Інтерактивна дошк...</div>
<div class="c r" style="right:1553px;top:527px"><span class="m">30</span> <span class="m">000</span>,<span class="m">00</span></div>
<div class="c" style="left:324px;top:527px;width:115px">Допорогова закупі...</div>
<div class="c" style="left:445px;top:527px;width:110px">Завершена закупі...</div>
<div class="c" style="left:561px;top:527px;width:118px">Завершено лот зак...</div>
<div class="c lnk" style="left:685px;top:527px;width:55px">Лот</div>
<div class="c" style="left:746px;top:527px;width:144px">ПАВЛОГРАДСЬКА ЗАГА...</div>
<div class="c" style="left:896px;top:527px;width:109px">ФОП Мармо Оле...</div>
<div class="c r" style="right:736px;top:527px"><span class="m">130</span>,<span class="m">00</span></div>
<div class="c r" style="right:607px;top:527px"><span class="m">0</span></div>
<div class="c r" style="right:464px;top:527px"><span class="m">29</span> <span class="m">870</span>,<span class="m">00</span></div>
<div class="c r" style="right:388px;top:527px"><span class="m">29</span> <span class="m">870</span>,<span class="m">00</span></div>
<div class="c r" style="right:234px;top:527px"><span class="m">29</span> <span class="m">870</span>,<span class="m">00</span></div>
<div class="c" style="left:1643px;top:527px;width:400px"><span class="m">32320000</span>-<span class="m">2</span> Телевізійне й аудіовізуальне обладнання</div>
<div class="c" style="left:12px;top:546px;width:55px">UA-<span class="m">201</span>...</div>
<div class="c" style="left:73px;top:546px;width:121px">Комп’ютерне облад...</div>
<div class="c r" style="right:1553px;top:546px"><span class="m">506</span> <span class="m">000</span>,<span class="m">00</span></div>
<div class="c" style="left:324px;top:546px;width:115px">Відкриті торги</div>
<div class="c" style="left:445px;top:546px;width:110px">Завершена закупі...</div>
<div class="c" style="left:561px;top:546px;width:118px">Завершено лот зак...</div>
<div class="c lnk" style="left:685px;top:546px;width:55px">Лот</div>
<div class="c" style="left:746px;top:546px;width:144px">Управління освіти Рівне...</div>
<div class="c" style="left:896px;top:546px;width:109px">ФОП Нестереня ...</div>
<div class="c r" style="right:736px;top:546px"><span class="m">217</span> <span class="m">200</span>,<span class="m">00</span></div>
<div class="c r" style="right:607px;top:546px"><span class="m">43</span></div>
<div class="c r" style="right:464px;top:546px"><span class="m">288</span> <span class="m">800</span>,<span class="m">00</span></div>
<div class="c r" style="right:388px;top:546px"><span class="m">288</span> <span class="m">800</span>,<span class="m">00</span></div>
<div class="c r" style="right:234px;top:546px"><span class="m">288</span> <span class="m">800</span>,<span class="m">00</span></div>
<div class="c" style="left:1643px;top:546px;width:400px"><span class="m">30200000</span>-<span class="m">1</span> Комп’ютерне обладнання та</div>
<div class="c" style="left:12px;top:565px;width:55px">UA-<span class="m">201</span>...</div>
<div class="c" style="left:73px;top:565px;width:121px">Лот. <span class="m">1</span> Інтерактивни...</div>
<div class="c r" style="right:1553px;top:565px"><span class="m">1</span> <span class="m">134</span> <span class="m">000</span>,<span class="m">00</span></div>
<div class="c" style="left:324px;top:565px;width:115px">Відкриті торги</div>
<div class="c" style="left:445px;top:565px;width:110px">Завершена закупі...</div>
<div class="c" style="left:561px;top:565px;width:118px">Завершено лот зак...</div>
<div class="c lnk" style="left:685px;top:565px;width:55px">Лот</div>
<div class="c" style="left:746px;top:565px;width:144px">КП “КОМУНАЛЬНИЙ ЗА...</div>
<div class="c" style="left:896px;top:565px;width:109px">ФОП Нестереня ...</div>
<div class="c r" style="right:736px;top:565px"><span class="m">169</span> <span class="m">200</span>,<span class="m">00</span></div>
<div class="c r" style="right:607px;top:565px"><span class="m">15</span></div>
<div class="c r" style="right:464px;top:565px"><span class="m">964</span> <span class="m">800</span>,<span class="m">00</span></div>
<div class="c r" style="right:388px;top:565px"><span class="m">964</span> <span class="m">800</span>,<span class="m">00</span></div>
<div class="c r" style="right:234px;top:565px"><span class="m">964</span> <span class="m">800</span>,<span class="m">00</span></div>
<div class="c" style="left:1643px;top:565px;width:400px"><span class="m">30230000</span>-<span class="m">0</span> Комп’ютерне обладнання</div>
<div class="c" style="left:12px;top:584px;width:55px">UA-<span class="m">201</span>...</div>
<div class="c" style="left:73px;top:584px;width:121px">Інтерактивна дошк...</div>
<div class="c r" style="right:1553px;top:584px"><span class="m">25</span> <span class="m">000</span>,<span class="m">00</span></div>
<div class="c" style="left:324px;top:584px;width:115px">Допорогова закупі...</div>
<div class="c" style="left:445px;top:584px;width:110px">Завершена закупі...</div>
<div class="c" style="left:561px;top:584px;width:118px">Завершено лот зак...</div>
<div class="c lnk" style="left:685px;top:584px;width:55px">Лот</div>
<div class="c" style="left:746px;top:584px;width:144px">Центр соціально-психо...</div>
<div class="c" style="left:896px;top:584px;width:109px">ФОП Мармо Вікт...</div>
<div class="c r" style="right:736px;top:584px"><span class="m">11</span>,<span class="m">00</span></div>
<div class="c r" style="right:607px;top:584px"><span class="m">0</span></div>
<div class="c r" style="right:464px;top:584px"><span class="m">24</span> <span class="m">989</span>,<span class="m">00</span></div>
<div class="c r" style="right:388px;top:584px"><span class="m">24</span> <span class="m">989</span>,<span class="m">00</span></div>
<div class="c r" style="right:234px;top:584px"><span class="m">24</span> <span class="m">989</span>,<span class="m">00</span></div>
<div class="c" style="left:1643px;top:584px;width:400px"><span class="m">30195200</span>-<span class="m">4</span> Електронні дошки чи прилади</div>
<div class="c" style="left:12px;top:603px;width:55px">UA-<span class="m">201</span>...</div>
<div class="c" style="left:73px;top:603px;width:121px"><span class="m">32320000</span>-<span class="m">2</span>- Телеві...</div>
<div class="c r" style="right:1553px;top:603px"><span class="m">788</span> <span class="m">041</span>,<span class="m">00</span></div>
<div class="c" style="left:324px;top:603px;width:115px">Відкриті торги</div>
<div class="c" style="left:445px;top:603px;width:110px">Завершена закупі...</div>
<div class="c" style="left:561px;top:603px;width:118px">Завершено лот зак...</div>
<div class="c lnk" style="left:685px;top:603px;width:55px">Лот</div>
<div class="c" style="left:746px;top:603px;width:144px">КУ “Районний центр по ...</div>
<div class="c" style="left:896px;top:603px;width:109px">ТОВ “Інтер Систе...</div>
<div class="c r" style="right:736px;top:603px"><span class="m">39</span> <span class="m">241</span>,<span class="m">00</span></div>
<div class="c r" style="right:607px;top:603px"><span class="m">5</span></div>
<div class="c r" style="right:464px;top:603px"><span class="m">748</span> <span class="m">800</span>,<span class="m">00</span></div>
<div class="c r" style="right:388px;top:603px"><span class="m">748</span> <span class="m">800</span>,<span class="m">00</span></div>
<div class="c r" style="right:234px;top:603px"><span class="m">748</span> <span class="m">800</span>,<span class="m">00</span></div>
<div class="c" style="left:1643px;top:603px;width:400px"><span class="m">32322000</span>-<span class="m">6</span> Мультимедійне обладнання</div>
<div class="c" style="left:12px;top:622px;width:55px">UA-<span class="m">201</span>...</div>
<div class="c" style="left:73px;top:622px;width:121px">Інтерактивна дошка</div>
<div class="c r" style="right:1553px;top:622px"><span class="m">21</span> <span class="m">560</span>,<span class="m">00</span></div>
<div class="c" style="left:324px;top:622px;width:115px">Допорогова закупі...</div>
<div class="c" style="left:445px;top:622px;width:110px">Завершена закупі...</div>
<div class="c" style="left:561px;top:622px;width:118px">Завершено лот зак...</div>
<div class="c lnk" style="left:685px;top:622px;width:55px">Лот</div>
<div class="c" style="left:746px;top:622px;width:144px">Територіальний відділ о...</div>
<div class="c" style="left:896px;top:622px;width:109px">ФОП Воєділов Іг...</div>
<div class="c r" style="right:736px;top:622px"><span class="m">5</span> <span class="m">451</span>,<span class="m">00</span></div>
<div class="c r" style="right:607px;top:622px"><span class="m">25</span></div>
<div class="c r" style="right:464px;top:622px"><span class="m">16</span> <span class="m">109</span>,<span class="m">00</span></div>
<div class="c r" style="right:388px;top:622px"><span class="m">14</span> <span class="m">938</span>,<span class="m">00</span></div>
<div class="c r" style="right:234px;top:622px"><span class="m">16</span> <span class="m">109</span>,<span class="m">00</span></div>
<div class="c" style="left:1643px;top:622px;width:400px"><span class="m">32320000</span>-<span class="m">2</span> Телевізійне й аудіовізуальне обладнання</div>
<div class="c" style="left:12px;top:641px;width:55px">UA-<span class="m">201</span>...</div>
<div class="c" style="left:73px;top:641px;width:121px">інфрачервона інтер...</div>
<div class="c r" style="right:1553px;top:641px"><span class="m">101</span> <span class="m">800</span>,<span class="m">00</span></div>
<div class="c" style="left:324px;top:641px;width:115px">Допорогова закупі...</div>
<div class="c" style="left:445px;top:641px;width:110px">Завершена закупі...</div>
<div class="c" style="left:561px;top:641px;width:118px">Завершено лот зак...</div>
<div class="c lnk" style="left:685px;top:641px;width:55px">Лот</div>
<div class="c" style="left:746px;top:641px;width:144px">ОПОРНИЙ НАВЧАЛЬН...</div>
<div class="c" style="left:896px;top:641px;width:109px">ТОВ “Інтер Систе...</div>
<div class="c r" style="right:736px;top:641px"><span class="m">4</span> <span class="m">089</span>,<span class="m">60</span></div>
<div class="c r" style="right:607px;top:641px"><span class="m">4</span></div>
<div class="c r" style="right:464px;top:641px"><span class="m">97</span> <span class="m">710</span>,<span class="m">40</span></div>
<div class="c r" style="right:388px;top:641px"><span class="m">97</span> <span class="m">710</span>,<span class="m">40</span></div>
<div class="c r" style="right:234px;top:641px"><span class="m">97</span> <span class="m">710</span>,<span class="m">40</span></div>
<div class="c" style="left:1643px;top:641px;width:400px"><span class="m">32320000</span>-<span class="m">2</span> Телевізійне й аудіовізуальне обладнання</div>
<div class="c" style="left:12px;top:660px;width:55px">UA-<span class="m">201</span>...</div>
<div class="c" style="left:73px;top:660px;width:121px">інтерактивні дошки...</div>
<div class="c r" style="right:1553px;top:660px"><span class="m">415</span> <span class="m">400</span>,<span class="m">00</span></div>
<div class="c" style="left:324px;top:660px;width:115px">Відкриті торги</div>
<div class="c" style="left:445px;top:660px;width:110px">Завершена закупі...</div>
<div class="c" style="left:561px;top:660px;width:118px">Завершено лот зак...</div>
<div class="c lnk" style="left:685px;top:660px;width:55px">Лот</div>
<div class="c" style="left:746px;top:660px;width:144px">Управління освіти і наук...</div>
<div class="c" style="left:896px;top:660px;width:109px">ТОВ “КРЕО СІНЕ...</div>
<div class="c r" style="right:736px;top:660px"><span class="m">39</span> <span class="m">050</span>,<span class="m">00</span></div>
<div class="c r" style="right:607px;top:660px"><span class="m">9</span></div>
<div class="c r" style="right:464px;top:660px"><span class="m">376</span> <span class="m">350</span>,<span class="m">00</span></div>
<div class="c r" style="right:388px;top:660px"><span class="m">376</span> <span class="m">350</span>,<span class="m">00</span></div>
<div class="c r" style="right:234px;top:660px"><span class="m">376</span> <span class="m">350</span>,<span class="m">00</span></div>
<div class="c" style="left:1643px;top:660px;width:400px"><span class="m">32320000</span>-<span class="m">2</span> Телевізійне й аудіовізуальне обладнання</div>
<div class="c" style="left:12px;top:679px;width:55px">UA-<span class="m">201</span>...</div>
<div class="c" style="left:73px;top:679px;width:121px">Шкільні меблі (Ком...</div>
<div class="c r" style="right:1553px;top:679px"><span class="m">250</span> <span class="m">000</span>,<span class="m">00</span></div>
<div class="c" style="left:324px;top:679px;width:115px">Відкриті торги</div>
<div class="c" style="left:445px;top:679px;width:110px">Завершена закупі...</div>
<div class="c" style="left:561px;top:679px;width:118px">Завершено лот зак...</div>
<div class="c lnk" style="left:685px;top:679px;width:55px">Лот</div>
<div class="c" style="left:746px;top:679px;width:144px">Управління освіти і наук...</div>
<div class="c" style="left:896px;top:679px;width:109px">ТОВ “КРЕО СІНЕ...</div>
<div class="c r" style="right:736px;top:679px"><span class="m">2</span> <span class="m">455</span>,<span class="m">00</span></div>
<div class="c r" style="right:607px;top:679px"><span class="m">1</span></div>
<div class="c r" style="right:464px;top:679px"><span class="m">247</span> <span class="m">545</span>,<span class="m">00</span></div>
<div class="c r" style="right:388px;top:679px"><span class="m">208</span> <span class="m">500</span>,<span class="m">00</span></div>
<div class="c r" style="right:234px;top:679px"><span class="m">247</span> <span class="m">545</span>,<span class="m">00</span></div>
<div class="c" style="left:1643px;top:679px;width:400px"><span class="m">39160000</span>-<span class="m">1</span> Шкільні меблі</div>
<div class="c" style="left:12px;top:698px;width:55px">UA-<span class="m">201</span>...</div>
<div class="c" style="left:73px;top:698px;width:121px">Інтерактивна дошк...</div>
<div class="c r" style="right:1553px;top:698px"><span class="m">154</span> <span class="m">000</span>,<span class="m">00</span></div>
<div class="c" style="left:324px;top:698px;width:115px">Допорогова закупі...</div>
<div class="c" style="left:445px;top:698px;width:110px">Завершена закупі...</div>
<div class="c" style="left:561px;top:698px;width:118px">Завершено лот зак...</div>
<div class="c lnk" style="left:685px;top:698px;width:55px">Лот</div>
<div class="c" style="left:746px;top:698px;width:144px">Відділ освіти, молоді та ...</div>
<div class="c" style="left:896px;top:698px;width:109px">ФОП Нестереня ...</div>
<div class="c r" style="right:736px;top:698px"><span class="m">47</span> <span class="m">000</span>,<span class="m">00</span></div>
<div class="c r" style="right:607px;top:698px"><span class="m">31</span></div>
<div class="c r" style="right:464px;top:698px"><span class="m">107</span> <span class="m">000</span>,<span class="m">00</span></div>
<div class="c r" style="right:388px;top:698px"><span class="m">107</span> <span class="m">000</span>,<span class="m">00</span></div>
<div class="c r" style="right:234px;top:698px"><span class="m">107</span> <span class="m">000</span>,<span class="m">00</span></div>
<div class="c" style="left:1643px;top:698px;width:400px"><span class="m">32320000</span>-<span class="m">2</span> Телевізійне й аудіовізуальне обладнання</div>
<div class="c" style="left:12px;top:717px;width:55px">UA-<span class="m">201</span>...</div>
<div class="c" style="left:73px;top:717px;width:121px">Комп’ютерне облад...</div>
<div class="c r" style="right:1553px;top:717px"><span class="m">49</span> <span class="m">375</span>,<span class="m">00</span></div>
<div class="c" style="left:324px;top:717px;width:115px">Допорогова закупі...</div>
<div class="c" style="left:445px;top:717px;width:110px">Завершена закупі...</div>
<div class="c" style="left:561px;top:717px;width:118px">Завершено лот зак...</div>
<div class="c lnk" style="left:685px;top:717px;width:55px">Лот</div>
<div class="c" style="left:746px;top:717px;width:144px">Нововолинська спеціал...</div>
<div class="c" style="left:896px;top:717px;width:109px">ФОП Мармо Вікт...</div>
<div class="c r" style="right:736px;top:717px"><span class="m">0</span>,<span class="m">00</span></div>
<div class="c r" style="right:607px;top:717px"><span class="m">0</span></div>
<div class="c r" style="right:464px;top:717px"><span class="m">49</span> <span class="m">375</span>,<span class="m">00</span></div>
<div class="c r" style="right:388px;top:717px"><span class="m">49</span> <span class="m">375</span>,<span class="m">00</span></div>
<div class="c r" style="right:234px;top:717px"><span class="m">49</span> <span class="m">375</span>,<span class="m">00</span></div>
<div class="c" style="left:1643px;top:717px;width:400px"><span class="m">30200000</span>-<span class="m">1</span> Комп’ютерне обладнання та</div>
<div class="c" style="left:12px;top:736px;width:55px">UA-<span class="m">201</span>...</div>
<div class="c" style="left:73px;top:736px;width:121px"><span class="m">30230000</span>-<span class="m">0</span> Комп’...</div>
<div class="c r" style="right:1553px;top:736px"><span class="m">508</span> <span class="m">210</span>,<span class="m">00</span></div>
<div class="c" style="left:324px;top:736px;width:115px">Відкриті торги</div>
<div class="c" style="left:445px;top:736px;width:110px">Завершена закупі...</div>
<div class="c" style="left:561px;top:736px;width:118px">Завершено лот зак...</div>
<div class="c lnk" style="left:685px;top:736px;width:55px">Лот</div>
<div class="c" style="left:746px;top:736px;width:144px">Управління освіти вико...</div>
<div class="c" style="left:896px;top:736px;width:109px">ПАТ “ЛИТЕР“ | <span class="m">24</span>...</div>
<div class="c r" style="right:736px;top:736px"><span class="m">40</span>,<span class="m">00</span></div>
<div class="c r" style="right:607px;top:736px"><span class="m">0</span></div>
<div class="c r" style="right:464px;top:736px"><span class="m">508</span> <span class="m">170</span>,<span class="m">00</span></div>
<div class="c r" style="right:388px;top:736px"><span class="m">362</span> <span class="m">199</span>,<span class="m">00</span></div>
<div class="c r" style="right:234px;top:736px"><span class="m">508</span> <span class="m">170</span>,<span class="m">00</span></div>
<div class="c" style="left:1643px;top:736px;width:400px"><span class="m">30230000</span>-<span class="m">0</span> Комп’ютерне обладнання</div>
<svg class="a" style="left:22px;top:375px" width="9" height="5" viewBox="0 0 9 5"><path d="M0 0 H9 L4.5 5Z" fill="#4a4a4a"/></svg>
<svg class="a" style="left:299px;top:299px" width="14" height="22" viewBox="0 0 14 22"><path d="M1 1.3 L1 17 L4.8 13.6 L7.7 19.6 L10.1 18.6 L7.3 12.8 L11.9 12.7Z" fill="#fff" stroke="#222" stroke-width="1.1" stroke-linejoin="round"/></svg>
</body></html>
